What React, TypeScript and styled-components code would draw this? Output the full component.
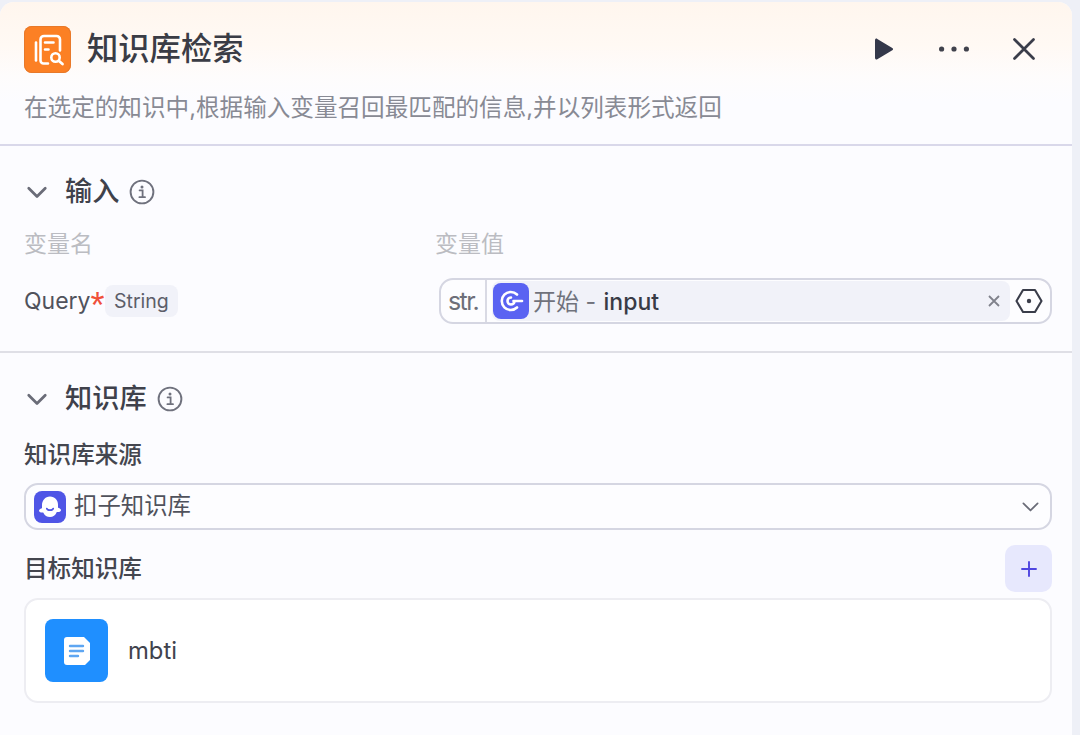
import React from "react";
import styled, { createGlobalStyle } from "styled-components";

const Global = createGlobalStyle`
  html, body { margin: 0; padding: 0; background: #eef0f7; }
  body { width: 1080px; height: 735px; overflow: hidden; font-family: "Inter", "Noto Sans CJK SC", sans-serif; }
`;

const Panel = styled.div`
  width: 1072px;
  height: 733px;
  margin-top: 2px;
  background: #fcfcff;
  border-radius: 14px 14px 0 0;
  box-sizing: border-box;
  overflow: hidden;
`;

const Header = styled.header`
  height: 144px;
  box-sizing: border-box;
  padding: 24px 37px 0 24px;
  background: linear-gradient(180deg, #fff6ee 0%, #fff9f4 30%, #fefcfc 52%, #fcfcff 70%, #fcfcff 100%);
  border-bottom: 2px solid #d9d8ea;
`;

const TitleRow = styled.div`
  display: flex;
  align-items: center;
  height: 47px;
`;

const NodeIcon = styled.div`
  width: 47px;
  height: 47px;
  border-radius: 8px;
  background: #fc8024;
  box-shadow: inset 0 0 0 1px #e8792a;
  display: flex;
  align-items: center;
  justify-content: center;
`;

const Title = styled.h1`
  margin: 0 0 0 16px;
  flex: 1;
  font-size: 31.3px;
  line-height: 47px;
  font-weight: 500;
  color: #3a3c45;
`;

const Actions = styled.div`
  display: flex;
  align-items: center;
  gap: 44px;
  margin-bottom: 2px;
`;

const Subtitle = styled.p`
  margin: 19px 0 0;
  font-size: 23.6px;
  line-height: 32px;
  color: #888a94;
  white-space: nowrap;
`;

const Section = styled.section<{ $height: number }>`
  height: ${(p) => p.$height}px;
  box-sizing: border-box;
  padding: 0 20px 0 24px;
`;

const Divider = styled.div`
  height: 2px;
  background: #dfdfe6;
`;

const SectionHead = styled.div<{ $top: number }>`
  display: flex;
  align-items: center;
  padding-top: ${(p) => p.$top}px;
  height: 34px;
`;

const Chevron = styled.div`
  width: 26px;
  margin-left: 2px;
  margin-right: 13px;
  display: flex;
`;

const SectionTitle = styled.h2`
  margin: 0 10px 0 0;
  font-size: 27.2px;
  line-height: 34px;
  font-weight: 500;
  color: #3f414b;
`;

const ColumnHead = styled.div`
  display: grid;
  grid-template-columns: 411px 1fr;
  margin-top: 19px;
  font-size: 23px;
  line-height: 32px;
  color: #bbbcc2;
`;

const InputRow = styled.div`
  display: grid;
  grid-template-columns: 415px 1fr;
  align-items: center;
  margin-top: 18px;
`;

const NameCell = styled.div`
  display: flex;
  align-items: center;
`;

const QueryName = styled.span`
  font-size: 23px;
  color: #50525c;
`;

const Star = styled.span`
  color: #f0503a;
  font-size: 36px;
  line-height: 36px;
  height: 26px;
  margin-right: -1px;
  font-weight: 400;
  font-family: "Liberation Sans", sans-serif;
`;

const TypeTag = styled.span`
  margin-left: 1px;
  height: 32px;
  padding: 0 9.5px;
  display: flex;
  align-items: center;
  border-radius: 8px;
  background: #f1f2f9;
  font-size: 19.5px;
  color: #5c5e69;
`;

const ValueBox = styled.div`
  height: 46px;
  box-sizing: border-box;
  border: 2px solid #d5d6e2;
  border-radius: 14px;
  background: #fdfdff;
  display: flex;
  align-items: stretch;
`;

const TypeCell = styled.div`
  width: 44px;
  border-right: 2px solid #d9dae4;
  display: flex;
  align-items: center;
  justify-content: center;
  font-size: 25px;
  font-weight: 400;
  color: #6d6f79;
  letter-spacing: -1.6px;
`;

const RefChip = styled.div`
  flex: 1;
  margin: 1px 2px 1px 5px;
  border-radius: 8px;
  background: #f1f2f9;
  display: flex;
  align-items: center;
  padding-left: 1px;
`;

const RefIcon = styled.div`
  width: 36px;
  height: 36px;
  border-radius: 8px;
  background: #5a63f2;
  display: flex;
  align-items: center;
  justify-content: center;
  margin-right: 4px;
`;

const RefLabel = styled.span`
  font-size: 23px;
  color: #70727c;
  white-space: pre;
  margin-bottom: 2px;
`;

const RefName = styled.span`
  font-weight: 500;
  color: #393b46;
  margin-left: 1px;
`;

const RefClose = styled.div`
  margin-left: auto;
  margin-right: 10px;
  display: flex;
`;

const HexCell = styled.div`
  width: 33px;
  margin-right: 5px;
  display: flex;
  align-items: center;
  justify-content: center;
`;

const FieldLabel = styled.div<{ $top: number }>`
  margin-top: ${(p) => p.$top}px;
  font-size: 23.6px;
  line-height: 32px;
  font-weight: 500;
  color: #44464f;
`;

const SelectBox = styled.div`
  margin-top: 12px;
  height: 47px;
  box-sizing: border-box;
  border: 2px solid #d5d6e2;
  border-radius: 14px;
  background: #fdfdff;
  display: flex;
  align-items: center;
  padding: 0 10px 0 8px;
`;

const BrandIcon = styled.div`
  width: 32px;
  height: 32px;
  border-radius: 8px;
  background: #4f55e6;
  display: flex;
  align-items: center;
  justify-content: center;
  margin-right: 8px;
`;

const SelectText = styled.span`
  flex: 1;
  font-size: 23.4px;
  line-height: 32px;
  padding-bottom: 1px;
  color: #50525c;
`;

const TargetRow = styled.div`
  display: flex;
  align-items: center;
  justify-content: space-between;
  margin-top: 15px;
`;

const AddButton = styled.div`
  width: 47px;
  height: 47px;
  border-radius: 10px;
  background: #e7e8fd;
  display: flex;
  align-items: center;
  justify-content: center;
`;

const KnowledgeCard = styled.div`
  margin-top: 6px;
  height: 105px;
  box-sizing: border-box;
  border: 2px solid #ededf2;
  border-radius: 14px;
  background: #ffffff;
  display: flex;
  align-items: center;
  padding-left: 19px;
`;

const FileIcon = styled.div`
  width: 63px;
  height: 63px;
  border-radius: 8px;
  background: #1f8fff;
  display: flex;
  align-items: center;
  justify-content: center;
  margin-right: 20px;
`;

const KnowledgeName = styled.span`
  font-size: 23.8px;
  font-weight: 400;
  color: #41434d;
`;

const ChevronIcon = ({ size = 22, color = "#6a6c78", sw = 3 }: { size?: number; color?: string; sw?: number }) => (
  <svg width={size} height={size} viewBox="0 0 24 24" fill="none" stroke={color} strokeWidth={sw} strokeLinecap="round" strokeLinejoin="round">
    <path d="M3 8 12 17l9-9" />
  </svg>
);

const InfoIcon = () => (
  <svg width="26" height="26" viewBox="0 0 26 26" fill="none">
    <circle cx="13" cy="13" r="11.4" stroke="#6f717d" strokeWidth="1.9" />
    <circle cx="13" cy="8" r="1.5" fill="#6f717d" />
    <path d="M10.6 11.4h3v6.6M10.4 18.2h5.6" stroke="#6f717d" strokeWidth="1.8" strokeLinecap="round" />
  </svg>
);

export default function App() {
  return (
    <>
      <Global />
      <Panel>
        <Header>
          <TitleRow>
            <NodeIcon>
              <svg width="34" height="34" viewBox="0 0 34 34" fill="none" stroke="#fff" strokeWidth="2.6" strokeLinecap="round">
                <path d="M5 9.500v18" />
                <path d="M17 30.500h-4.500a3 3 0 0 1-3-3V6.500a3.500 3.500 0 0 1 3.500-3.500h12.500a3.500 3.500 0 0 1 3.500 3.500v11" />
                <path d="M14 9.500h8.500M14 16.500h3.500" />
                <circle cx="24.500" cy="24.500" r="4.200" strokeWidth="2.600" />
                <path d="M28 28 31.500 31" strokeWidth="2.800" />
              </svg>
            </NodeIcon>
            <Title>知识库检索</Title>
            <Actions>
              <svg width="22" height="24" viewBox="0 0 22 24">
                <path d="M2 3.200c0-1.300 1.300-2 2.300-1.300l15 9c1 .6 1 1.800 0 2.400l-15 9c-1 .6-2.300-.1-2.300-1.300z" fill="#34384a" />
              </svg>
              <svg width="30" height="8" viewBox="0 0 30 8" fill="#40424c">
                <circle cx="2.600" cy="4" r="2.600" /><circle cx="15" cy="4" r="2.600" /><circle cx="27.400" cy="4" r="2.600" />
              </svg>
              <svg width="22" height="22" viewBox="0 0 22 22" fill="none" stroke="#3a3d4a" strokeWidth="2.700" strokeLinecap="round">
                <path d="M1.500 1.500l19 19M20.500 1.500l-19 19" />
              </svg>
            </Actions>
          </TitleRow>
          <Subtitle>在选定的知识中,根据输入变量召回最匹配的信息,并以列表形式返回</Subtitle>
        </Header>

        <Section $height={205}>
          <SectionHead $top={29}>
            <Chevron><ChevronIcon /></Chevron>
            <SectionTitle>输入</SectionTitle>
            <InfoIcon />
          </SectionHead>
          <ColumnHead>
            <span>变量名</span>
            <span>变量值</span>
          </ColumnHead>
          <InputRow>
            <NameCell>
              <QueryName>Query</QueryName>
              <Star>*</Star>
              <TypeTag>String</TypeTag>
            </NameCell>
            <ValueBox>
              <TypeCell>str.</TypeCell>
              <RefChip>
                <RefIcon>
                  <svg width="26" height="26" viewBox="0 0 26 26" fill="none" stroke="#fff" strokeWidth="2.600" strokeLinecap="round">
                    <path d="M19 6.500A9 9 0 1 0 19 19.500" />
                    <path d="M13 9.500a3.500 3.500 0 1 0 0 7 3.500 3.500 0 0 0 3.400-2.800" />
                    <path d="M15.500 13H24" />
                  </svg>
                </RefIcon>
                <RefLabel>
                  开始 - <RefName>input</RefName>
                </RefLabel>
                <RefClose>
                  <svg width="12" height="12" viewBox="0 0 12 12" fill="none" stroke="#80828c" strokeWidth="1.800">
                    <path d="M1 1l10 10M11 1 1 11" />
                  </svg>
                </RefClose>
              </RefChip>
              <HexCell>
                <svg width="28" height="26" viewBox="0 0 28 26" fill="none">
                  <path d="M8 2h12l6.500 11L20 24H8L1.500 13z" stroke="#3a3d4a" strokeWidth="2.100" strokeLinejoin="round" />
                  <circle cx="14" cy="13" r="2.200" fill="#3a3d4a" />
                </svg>
              </HexCell>
            </ValueBox>
          </InputRow>
        </Section>
        <Divider />
        <Section $height={382}>
          <SectionHead $top={29}>
            <Chevron><ChevronIcon /></Chevron>
            <SectionTitle>知识库</SectionTitle>
            <InfoIcon />
          </SectionHead>
          <FieldLabel $top={23}>知识库来源</FieldLabel>
          <SelectBox>
            <BrandIcon>
              <svg width="28" height="28" viewBox="0 0 28 28">
                <path d="M14 3.500c5 0 8 3.700 8 8.200v3c1.700.4 3 1.300 3 2.500 0 1.500-2.500 2-4.200 1.800C19.500 22.500 17 24 14 24s-5.500-1.500-6.800-4.500C5.500 19.700 3 19.200 3 17.700c0-1.200 1.300-2.100 3-2.500v-3c0-4.500 3-8.700 8-8.700z" fill="#fff" />
                <path d="M10.800 15.500c.6 2.200 5.800 2.200 6.400 0" stroke="#4f55e6" strokeWidth="1.700" fill="none" strokeLinecap="round" />
              </svg>
            </BrandIcon>
            <SelectText>扣子知识库</SelectText>
            <ChevronIcon size={19} color="#6a6c78" sw={2.2} />
          </SelectBox>
          <TargetRow>
            <FieldLabel $top={0}>目标知识库</FieldLabel>
            <AddButton>
              <svg width="16" height="16" viewBox="0 0 16 16" stroke="#4f46e0" strokeWidth="1.900" strokeLinecap="round">
                <path d="M8 1v14M1 8h14" />
              </svg>
            </AddButton>
          </TargetRow>
          <KnowledgeCard>
            <FileIcon>
              <svg width="26" height="28" viewBox="0 0 26 28">
                <path d="M3 0h17l6 6v17l-5 5H3a3 3 0 0 1-3-3V3a3 3 0 0 1 3-3z" fill="#fff" />
                <path d="M6 9h13M6 14h13M6 19h8" stroke="#5ea6f2" strokeWidth="2.400" strokeLinecap="round" />
              </svg>
            </FileIcon>
            <KnowledgeName>mbti</KnowledgeName>
          </KnowledgeCard>
        </Section>
      </Panel>
    </>
  );
}
